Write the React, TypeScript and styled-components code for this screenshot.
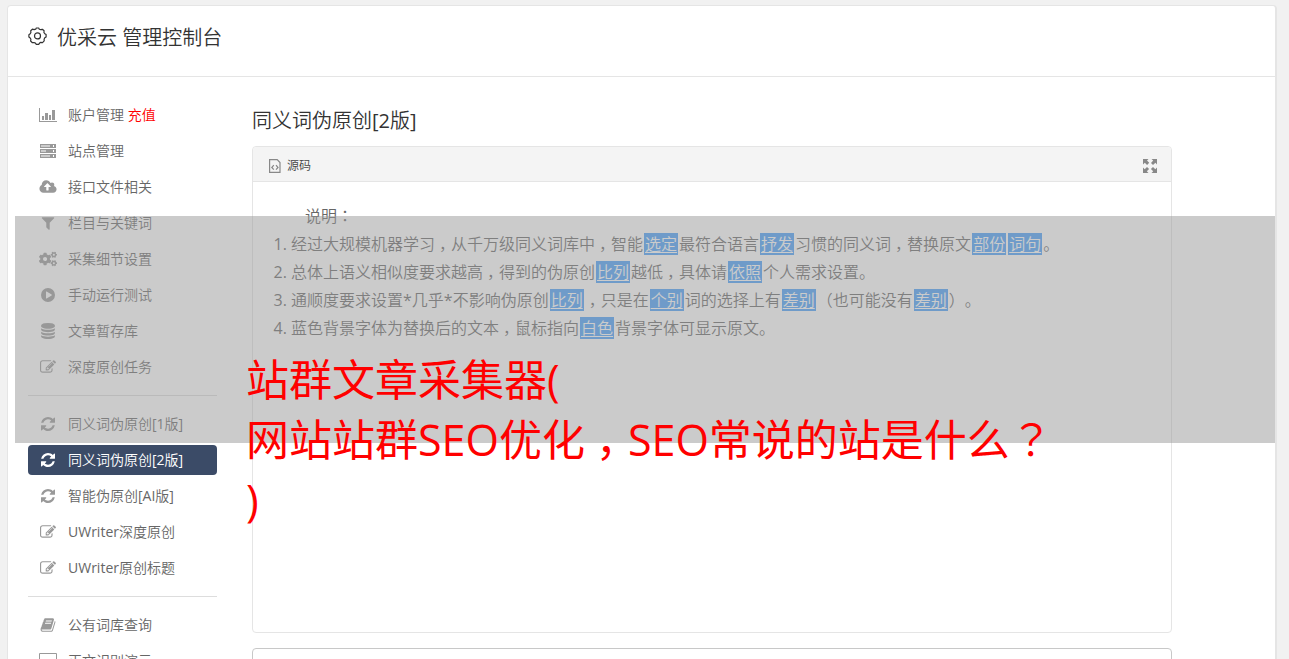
import React from 'react';
import styled, { createGlobalStyle } from 'styled-components';
import { FaCogs } from 'react-icons/fa';

const GlobalStyle = createGlobalStyle`
  * { box-sizing: border-box; }
  body {
    margin: 0;
    background: #f1f1f1;
    color: #666;
    font-family: "Open Sans", "Noto Sans CJK SC DemiLight", "Noto Sans CJK SC", sans-serif;
    font-size: 14px;
    text-spacing-trim: space-all;
  }
  button { font: inherit; color: inherit; border: 0; background: none; padding: 0; cursor: pointer; }
`;

const Page = styled.div`
  position: relative;
  height: 100vh;
  overflow: hidden;
  padding: 5px 12px 0 7px;
`;

const Card = styled.div`
  background: #fff;
  border: 1px solid #e5e5e5;
  border-right-width: 2px;
  border-radius: 4px;
`;

const Header = styled.header`
  display: flex;
  align-items: center;
  gap: 10px;
  height: 71px;
  padding: 0 20px 10px;
  border-bottom: 1px solid #e5e5e5;
  color: #333;
`;

const HeaderTitle = styled.h1`
  margin: 0;
  padding-top: 3px;
  font-size: 20px;
  font-weight: 400;
  line-height: 28px;
`;

const Body = styled.div`
  display: flex;
  align-items: flex-start;
  gap: 35px;
  padding: 23px 103px 0 20px;
`;

const Sidebar = styled.nav`
  display: flex;
  flex-direction: column;
  gap: 6px;
  width: 189px;
  flex: none;
`;

const NavLink = styled.a<{ $active?: boolean }>`
  display: flex;
  align-items: center;
  gap: 10px;
  height: 30px;
  padding: 0 10px;
  border-radius: 4px;
  background: ${(p) => (p.$active ? '#3b4b67' : 'transparent')};
  color: ${(p) => (p.$active ? '#fff' : '#666')};
  text-decoration: none;
  white-space: nowrap;
  svg { color: ${(p) => (p.$active ? '#fff' : '#999')}; }
`;

const NavLabel = styled.span`
  padding-bottom: 2px;
`;

const IconSlot = styled.span`
  display: flex;
  justify-content: center;
  width: 20px;
`;

const Recharge = styled.span`
  color: #f00;
`;

const Divider = styled.hr`
  width: 100%;
  height: 1px;
  margin: 7px 0;
  border: 0;
  background: #ddd;
`;

const Main = styled.main`
  flex: 1;
  min-width: 0;
`;

const Heading = styled.h2`
  margin: 6px 0 11px;
  color: #333;
  font-size: 20px;
  font-weight: 400;
  line-height: 29px;
`;

const Panel = styled.section`
  min-height: 487px;
  border: 1px solid #e5e5e5;
  border-radius: 4px;
`;

const ResultPanel = styled(Panel)`
  min-height: 120px;
  margin-top: 15px;
  border-color: #c8c8c8;
`;

const Toolbar = styled.div`
  display: flex;
  align-items: center;
  justify-content: space-between;
  height: 35px;
  padding: 1px 14px 0 16px;
  border-bottom: 1px solid #e5e5e5;
  border-radius: 4px 4px 0 0;
  background: #f4f4f4;
`;

const ToolButton = styled.button`
  display: flex;
  align-items: center;
  gap: 6px;
  padding-top: 2px;
  color: #444;
  font-size: 12px;
  line-height: 18px;
  svg { color: #888; }
`;

const Notes = styled.div`
  padding: 20px 20px 20px 38px;
  color: #666;
  font-size: 16px;
  line-height: 28px;
  p { margin: 0; padding-left: 14px; }
  ol { margin: 0; padding: 0; }
`;

const Replaced = styled.u`
  margin: 0 1px;
  padding: 0 1px;
  background: #479ffb;
  color: #fff;
  text-underline-offset: 2px;
`;

const Centred = styled.span`
  font-family: "Noto Sans CJK TC DemiLight", "Noto Sans CJK TC", sans-serif;
  line-height: 0;
`;

const Comma = styled.span`
  display: inline-block;
  width: 1em;
  line-height: 1;
  text-align: center;
  font-feature-settings: "halt";
`;

const Banner = styled.div`
  position: absolute;
  top: 216px;
  left: 15px;
  right: 14px;
  height: 227px;
  padding: 134px 0 0 231px;
  background: rgba(151, 151, 151, 0.5);
  pointer-events: none;
`;

const BannerText = styled.p`
  margin: 0;
  color: #f00;
  font-family: "Open Sans", "Noto Sans CJK SC", sans-serif;
  font-size: 43px;
  line-height: 60px;
  white-space: nowrap;
`;

/* Sets commas, colons and brackets in the middle of their square. */
const Zh = ({ children }: { children: string }) => (
  <>
    {children.split(/([，：？（）])/).map((part, i) => {
      if (part === '，') return <Comma key={i}>{part}</Comma>;
      return /^[：？（）]$/.test(part) ? <Centred key={i}>{part}</Centred> : part;
    })}
  </>
);

const Glyph = ({ d, box, w = 16, h = 16 }: { d: string; box: string; w?: number; h?: number }) => (
  <svg width={w} height={h} viewBox={box} fill="currentColor" fillRule="evenodd" aria-hidden="true">
    <path d={d} />
  </svg>
);

const BarChartIcon = () => (
  <Glyph w={18} h={16} box="0 0 18 16" d="M0 1h1v13h17v1H0zM3 9h2v4H3zM6 6h3v7H6zM10 8h2v5h-2zM13 3h3v10h-3z" />
);
const ServerIcon = () => (
  <Glyph w={16} h={14} box="0 0 16 14" d="M0 0h16v4H0zM1 1.500v1h9v-1zM13 1v2h1V1zM0 5h16v4H0zM1 6.500v1h5v-1zM13 6v2h1V6zM0 10h16v4H0zM1 11.500v1h9v-1zM13 11v2h1v-2z" />
);
const CloudIcon = () => (
  <Glyph w={18} h={16} box="-64 0 1920 1792" d="M1216 864q0-14-9-23l-352-352q-9-9-23-9t-23 9l-351 351q-10 12-10 24 0 14 9 23t23 9h224v352q0 13 9.500 22.500t22.500 9.500h192q13 0 22.500-9.500t9.500-22.500v-352h224q13 0 22.500-9.500t9.500-22.500zm640 288q0 159-112.500 271.500t-271.500 112.500h-1088q-185 0-316.500-131.500t-131.500-316.500q0-130 70-240t188-165q-2-30-2-43 0-212 150-362t362-150q156 0 285.500 87t188.500 231q71-62 166-62 106 0 181 75t75 181q0 76-41 138 130 31 213.500 135.500t83.500 238.500z" />
);
const FilterIcon = () => (
  <Glyph box="0 0 1792 1792" d="M1595 295q17 41-14 70l-493 493v742q0 42-39 59-13 5-25 5-27 0-45-19l-256-256q-19-19-19-45v-486l-493-493q-31-29-14-70 17-39 59-39h1280q42 0 59 39z" />
);
const PlayIcon = () => (
  <Glyph w={14} h={14} box="0 0 14 14" d="M7 0a7 7 0 1 1 0 14A7 7 0 0 1 7 0zM5 3.800v6.400q0 .6.600.3l5-3.100q.5-.4 0-.8l-5-3.100q-.6-.3-.6.300z" />
);
const DatabaseIcon = () => (
  <Glyph box="0 0 1792 1792" d="M896 768q237 0 443-43t325-127v170q0 69-103 128t-280 93.500-385 34.500-385-34.500-280-93.500-103-128v-170q119 84 325 127t443 43zm0 768q237 0 443-43t325-127v170q0 69-103 128t-280 93.500-385 34.500-385-34.500-280-93.500-103-128v-170q119 84 325 127t443 43zm0-384q237 0 443-43t325-127v170q0 69-103 128t-280 93.500-385 34.500-385-34.500-280-93.500-103-128v-170q119 84 325 127t443 43zm0-1152q208 0 385 34.500t280 93.500 103 128v128q0 69-103 128t-280 93.500-385 34.500-385-34.500-280-93.500-103-128v-128q0-69 103-128t280-93.500 385-34.500z" />
);
const EditIcon = () => (
  <Glyph box="0 0 1792 1792" d="M888 1184l116-116-152-152-116 116v56h96v96h56zm440-720q-16-16-33 1l-350 350q-17 17-1 33t33-1l350-350q17-17 1-33zm80 594v190q0 119-84.500 203.500t-203.500 84.500h-832q-119 0-203.500-84.500t-84.500-203.500v-832q0-119 84.500-203.500t203.500-84.500h832q63 0 117 25 15 7 18 23 3 17-9 29l-49 49q-14 14-32 8-23-6-45-6h-832q-66 0-113 47t-47 113v832q0 66 47 113t113 47h832q66 0 113-47t47-113v-126q0-13 9-22l64-64q15-15 35-7t20 29zm-96-738l288 288-672 672h-288v-288zm444 132l-92 92-288-288 92-92q28-28 68-28t68 28l152 152q28 28 28 68t-28 68z" />
);
const RefreshIcon = () => (
  <Glyph w={14} h={14} box="0 128 1536 1536" d="M1511 1056q0 5-1 7-64 268-268 434.500t-478 166.500q-146 0-282.500-55t-243.500-157l-129 129q-19 19-45 19t-45-19-19-45v-448q0-26 19-45t45-19h448q26 0 45 19t19 45-19 45l-137 137q71 66 161 102t187 36q134 0 250-65t186-179q11-17 53-117 8-23 30-23h192q13 0 22.500 9.500t9.500 22.500zm25-800v448q0 26-19 45t-45 19h-448q-26 0-45-19t-19-45 19-45l138-138q-148-137-349-137-134 0-250 65t-186 179q-11 17-53 117-8 23-30 23h-199q-13 0-22.500-9.500t-9.500-22.500v-7q65-268 270-434.500t480-166.500q146 0 284 55.500t245 156.500l130-129q19-19 45-19t45 19 19 45z" />
);
const BookIcon = () => (
  <Glyph box="0 0 1792 1792" d="M1703 478q40 57 18 129l-275 906q-19 64-76.500 107.500t-122.500 43.500h-923q-77 0-148.500-53.500t-99.500-131.500q-24-67-2-127 0-4 3-27t4-37q1-8-3-21.500t-3-19.500q2-11 8-21t16.500-23.500 16.500-23.500q23-38 45-91.500t30-91.500q3-10 .5-30t-.5-28q3-11 17-28t17-23q21-36 42-92t25-90q1-9-2.500-32t.5-28q4-13 22-30.500t22-22.500q19-26 42.500-84.500t27.500-96.500q1-8-3-25.500t-2-26.500q2-8 9-18t18-23 17-21q8-12 16.500-30.500t15-35 16-36 19.500-32 26.500-23.500 36-11.500 47.500 5.500l-1 3q38-9 51-9h761q74 0 114 56t18 130l-274 906q-36 119-71.500 153.500t-128.500 34.500h-869q-27 0-38 15-11 16-1 43 24 70 144 70h923q29 0 56-15.500t35-41.500l300-987q7-22 5-57 38 15 59 43zm-1064 2q-4 13 2 22.500t20 9.500h608q13 0 25.500-9.500t16.500-22.500l21-64q4-13-2-22.500t-20-9.500h-608q-13 0-25.500 9.500t-16.500 22.500zm-83 256q-4 13 2 22.500t20 9.500h608q13 0 25.500-9.500t16.500-22.500l21-64q4-13-2-22.500t-20-9.500h-608q-13 0-25.500 9.500t-16.500 22.500z" />
);
const ScreenIcon = () => (
  <Glyph w={18} h={16} box="0 0 18 16" d="M1 0h16a1 1 0 0 1 1 1v11a1 1 0 0 1-1 1h-6v2h2v1H5v-1h2v-2H1a1 1 0 0 1-1-1V1a1 1 0 0 1 1-1zM1 1v9h16V1z" />
);

const GearIcon = () => (
  <svg width="19" height="19" viewBox="0 0 19 19" fill="none" stroke="currentColor" strokeWidth="1.200" strokeLinejoin="round" aria-hidden="true">
    <path d="M7.700 2.200 8.300 1h2.400l.6 1.200 1.500.5 1.600-.4 1.700 1.500-.2 1.700.9 1.200 1.300.9v2.300l-1.300.9-.7 1.400.1 1.700-1.700 1.700-1.700-.3-1.200.8-.9 1.300H8.300l-.9-1.300-1.400-.6-1.600.2-1.800-1.700.3-1.700-.7-1.300-1.300-1V7.700l1.300-.9.7-1.400-.2-1.700 1.700-1.500 1.700.4z" />
    <circle cx="9.500" cy="8.900" r="3" />
  </svg>
);
const SourceIcon = () => (
  <svg width="12" height="14" viewBox="0 0 12 14" fill="none" stroke="currentColor" aria-hidden="true">
    <path strokeWidth="1.200" d="M.6.600h7.600l2.800 3v9.800H.6zM4.800 6.200 2.800 8.500l2 2.200M7 6.200l2 2.300-2 2.200" />
  </svg>
);
const ExpandIcon = () => (
  <Glyph w={14} h={14} box="0 0 14 14" d="M0 0h5.500L4 1.600l2.200 2.200-2.100 2.100L1.800 3.700 0 5.500zM14 0v5.500l-1.600-1.700-2.400 2.200-2-2.100 2.200-2.300L8.500 0zM0 14V8.500l1.700 1.700L4 8l2.100 2.100-2.300 2.200L5.500 14zM14 14H8.500l1.700-1.700L7.900 10 10 8l2.300 2.200L14 8.500z" />
);

type Item = { label: string; icon: React.ReactNode; active?: boolean; extra?: string };

const groups: Item[][] = [
  [
    { label: '账户管理', icon: <BarChartIcon />, extra: '充值' },
    { label: '站点管理', icon: <ServerIcon /> },
    { label: '接口文件相关', icon: <CloudIcon /> },
    { label: '栏目与关键词', icon: <FilterIcon /> },
    { label: '采集细节设置', icon: <FaCogs size={18} /> },
    { label: '手动运行测试', icon: <PlayIcon /> },
    { label: '文章暂存库', icon: <DatabaseIcon /> },
    { label: '深度原创任务', icon: <EditIcon /> },
  ],
  [
    { label: '同义词伪原创[1版]', icon: <RefreshIcon /> },
    { label: '同义词伪原创[2版]', icon: <RefreshIcon />, active: true },
    { label: '智能伪原创[AI版]', icon: <RefreshIcon /> },
    { label: 'UWriter深度原创', icon: <EditIcon /> },
    { label: 'UWriter原创标题', icon: <EditIcon /> },
  ],
  [
    { label: '公有词库查询', icon: <BookIcon /> },
    { label: '正文识别演示', icon: <ScreenIcon /> },
  ],
];

export default function App() {
  return (
    <Page>
      <GlobalStyle />
      <Card>
        <Header>
          <GearIcon />
          <HeaderTitle>优采云 管理控制台</HeaderTitle>
        </Header>
        <Body>
          <Sidebar>
            {groups.map((items, g) => (
              <React.Fragment key={g}>
                {g > 0 && <Divider />}
                {items.map((item) => (
                  <NavLink key={item.label} href="#" $active={item.active}>
                    <IconSlot>{item.icon}</IconSlot>
                    <NavLabel>
                      {item.label}
                      {item.extra && <Recharge> {item.extra}</Recharge>}
                    </NavLabel>
                  </NavLink>
                ))}
              </React.Fragment>
            ))}
          </Sidebar>
          <Main>
            <Heading>同义词伪原创[2版]</Heading>
            <Panel>
              <Toolbar>
                <ToolButton type="button">
                  <SourceIcon />
                  源码
                </ToolButton>
                <ToolButton type="button" aria-label="全屏">
                  <ExpandIcon />
                </ToolButton>
              </Toolbar>
              <Notes>
                <p><Zh>说明：</Zh></p>
                <ol>
                  <li>
                    <Zh>经过大规模机器学习，从千万级同义词库中，智能</Zh>
                    <Replaced>选定</Replaced>最符合语言<Replaced>抒发</Replaced>
                    <Zh>习惯的同义词，替换原文</Zh>
                    <Replaced>部份</Replaced><Replaced>词句</Replaced>。
                  </li>
                  <li>
                    <Zh>总体上语义相似度要求越高，得到的伪原创</Zh>
                    <Replaced>比列</Replaced>
                    <Zh>越低，具体请</Zh>
                    <Replaced>依照</Replaced>个人需求设置。
                  </li>
                  <li>
                    通顺度要求设置*几乎*不影响伪原创<Replaced>比列</Replaced>
                    <Zh>，只是在</Zh>
                    <Replaced>个别</Replaced>词的选择上有<Replaced>差别</Replaced>
                    <Zh>（也可能没有</Zh>
                    <Replaced>差别</Replaced>
                    <Zh>）。</Zh>
                  </li>
                  <li>
                    <Zh>蓝色背景字体为替换后的文本，鼠标指向</Zh>
                    <Replaced>白色</Replaced>背景字体可显示原文。
                  </li>
                </ol>
              </Notes>
            </Panel>
            <ResultPanel />
          </Main>
        </Body>
      </Card>
      <Banner>
        <BannerText>
          站群文章采集器(
          <br />
          <Zh>网站站群SEO优化，SEO常说的站是什么？</Zh>
          <br />)
        </BannerText>
      </Banner>
    </Page>
  );
}
